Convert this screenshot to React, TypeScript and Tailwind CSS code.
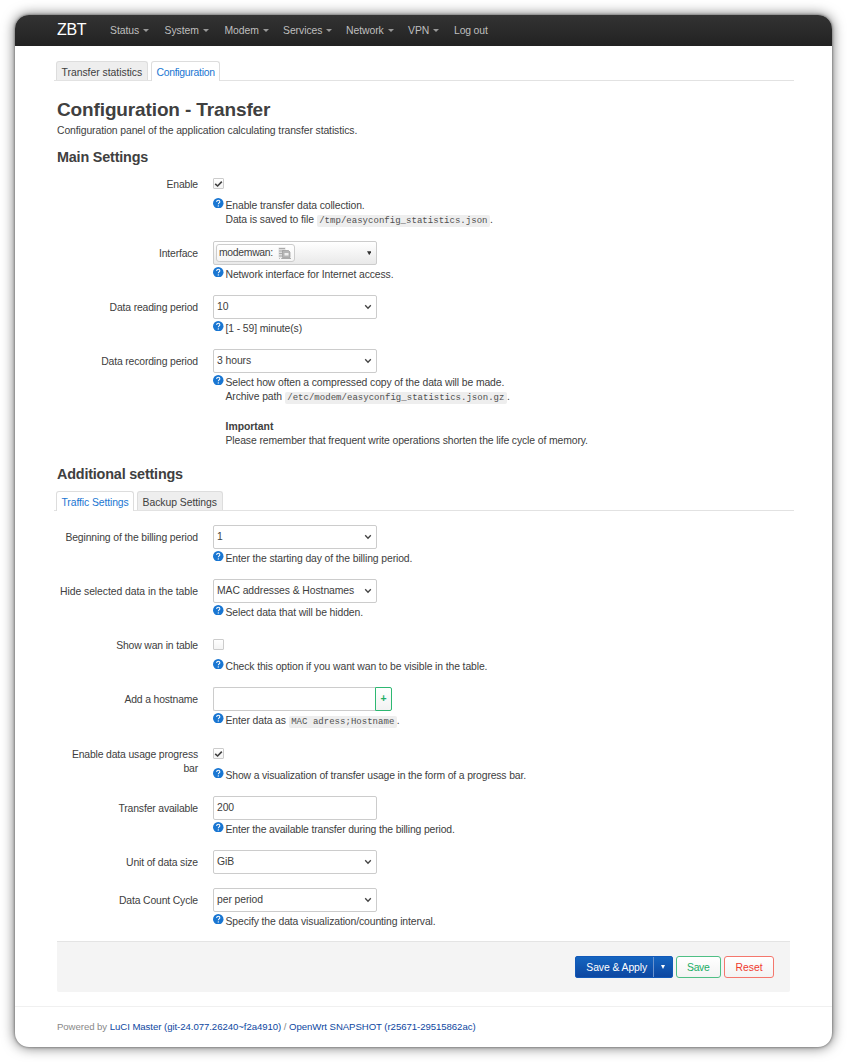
import type { ReactNode } from "react";

const nav: [string, string][] = [
  ["Status", "w-[54.5px]"],
  ["System", "w-[60px]"],
  ["Modem", "w-[58.5px]"],
  ["Services", "w-[63px]"],
  ["Network", "w-[62px]"],
  ["VPN", "w-[46px]"],
];

function HelpIcon() {
  return (
    <svg viewBox="0 0 20 20" className="mt-[-1.5px] h-[10.5px] w-[10.5px] shrink-0">
      <circle cx="10" cy="10" r="10" fill="#1976d2" />
      <path d="M7 7.6C7 5.4 8.3 4.4 10 4.4s3.1 1 3.1 2.7c0 2.2-3 2.3-3 4.9" fill="none" stroke="#fff" strokeWidth="2" />
      <circle cx="10.1" cy="15" r="1.3" fill="#fff" />
    </svg>
  );
}

function Code({ children }: { children: ReactNode }) {
  return (
    <code className="rounded-[2px] bg-[#eeeeee] px-[2.5px] py-[1px] font-['Liberation_Mono',monospace] text-[9px] tracking-[0.03px] text-[#505050]">
      {children}
    </code>
  );
}

type RowProps = { label: ReactNode; h: string; help?: ReactNode; tight?: boolean; children: ReactNode };

function Row({ label, h, help, tight, children }: RowProps) {
  return (
    <div className={`flex shrink-0 ${h}`}>
      <div className="w-[141px] shrink-0 pt-[5.5px] text-right tracking-[-0.15px]">{label}</div>
      <div className="ml-[15px] flex flex-col">
        <div className="flex h-6 items-center">{children}</div>
        {help && (
          <div className={`mt-[3px] flex gap-[2px] whitespace-nowrap ${tight ? "tracking-[-0.15px]" : ""}`}>
            <HelpIcon />
            <div>{help}</div>
          </div>
        )}
      </div>
    </div>
  );
}

function Select({ value }: { value: string }) {
  return (
    <div className="flex h-[23.5px] w-[164px] items-center justify-between self-start rounded-[2px] border border-[#cccccc] bg-white pt-px pr-[4px] pl-[3px] tracking-[-0.08px]">
      <span>{value}</span>
      <svg viewBox="0 0 8 6" className="h-[6px] w-[8px]" fill="none" stroke="#444" strokeWidth="1.3">
        <path d="M1.2 1.2 4 4.2 6.8 1.2" />
      </svg>
    </div>
  );
}

function Check({ on }: { on?: boolean }) {
  return (
    <span className="mb-px flex h-[11px] w-[11px] items-center justify-center rounded-[1px] border border-[#cccccc] bg-gradient-to-b from-white to-[#f4f4f4]">
      {on && (
        <svg viewBox="0 0 9 8" className="h-[8px] w-[9px] shrink-0" fill="none" stroke="#404040" strokeWidth="1.6">
          <path d="M1.2 3.8 3.6 6 7.8 1.6" />
        </svg>
      )}
    </span>
  );
}

function Tabs({ items, active }: { items: [string, string][]; active: number }) {
  return (
    <div className="-ml-[3px] flex h-[20px] w-[740px] shrink-0 gap-[3px] border-b border-[#e2e2e2] pl-[2px]">
      {items.map(([t, c], i) => (
        <div
          key={t}
          className={`rounded-t-[3px] border border-b-0 border-[#dddddd] pt-[3.5px] pl-[4.5px] whitespace-nowrap ${c} ${
            i === active ? "-mb-px h-[20px] bg-white text-[#1976d2]" : "h-[19px] bg-[#eeeeee]"
          }`}
        >
          {t}
        </div>
      ))}
    </div>
  );
}

function Interface() {
  return (
    <div className="flex h-6 w-[164px] items-center justify-between rounded-[2px] border border-[#cccccc] bg-gradient-to-b from-white to-[#e9e9e9] pr-[5px] pl-[2px]">
      <span className="flex h-[18px] w-[79px] items-center rounded-[3px] border border-[#cccccc] bg-gradient-to-b from-white to-[#f5f5f5] pl-[2px] tracking-[-0.3px]">
        <span className="w-[58.5px]">modemwan:</span>
        <svg viewBox="0 0 13 12" className="h-[12px] w-[13px] shrink-0">
          <path d="M.5.5h7v10h-7z" fill="#ddd" />
          <path d="M1 1.5h6M1 4h5M1 6.5h3M1 9h3" stroke="#aaa" />
          <path d="M1 11.5h4" stroke="#bbb" strokeDasharray="1 1" />
          <path d="M4.5 3.5h6l1.5 1.5v5.5h-7.5z" fill="#b5b5b5" stroke="#999" strokeWidth=".7" />
          <path d="M6.500 6h4v2.500h-4z" fill="#eee" />
          <path d="M4 11.500h9" stroke="#aaa" />
        </svg>
      </span>
      <svg viewBox="0 0 5 5" className="h-[4.5px] w-[4.5px]">
        <path d="M0 .3h5L2.5 4.7z" fill="#333" />
      </svg>
    </div>
  );
}

export default function App() {
  return (
    <div className="h-[1062px] w-[847px] bg-white pt-[15px] pl-[15px] font-['Liberation_Sans',Arial,sans-serif] text-[10.4px] leading-[14px] tracking-[-0.11px] text-[#404040]">
      <div className="flex h-[1032px] w-[817px] flex-col overflow-hidden rounded-[14px] bg-white shadow-[0_0_3px_rgba(0,0,0,0.5),0_0_13px_rgba(0,0,0,0.6)]">
        <header className="flex h-[31px] shrink-0 items-center bg-gradient-to-b from-[#333333] to-[#222222] pl-[42px] tracking-[-0.05px] text-[#bfbfbf]">
          <div className="w-[53px] text-[16px] leading-[28px] tracking-[-0.3px] text-white">
            <span className="relative -top-[1px]">ZBT</span>
          </div>
          {nav.map(([n, w]) => (
            <div key={n} className={`flex shrink-0 items-center gap-[4px] ${w}`}>
              {n}
              <svg viewBox="0 0 6 3" className="h-[3px] w-[6px]">
                <path d="M0 0h6L3 3z" fill="#999" />
              </svg>
            </div>
          ))}
          <div className="tracking-[-0.15px]">Log out</div>
        </header>
        <main className="flex shrink-0 flex-col pt-[15px] pl-[42px]">
          <Tabs
            items={[
              ["Transfer statistics", "w-[92px] tracking-[-0.02px]"],
              ["Configuration", "w-[69px] tracking-[-0.28px]"],
            ]}
            active={1}
          />
          <h2 className="mt-[14px] h-[29px] text-[19px] leading-[29px] font-bold tracking-[-0.13px]">Configuration - Transfer</h2>
          <p className="h-[14px] tracking-[-0.1px]">Configuration panel of the application calculating transfer statistics.</p>
          <h3 className="mt-[9px] h-[20px] text-[14.4px] leading-[20px] font-bold tracking-[-0.19px]">Main Settings</h3>
          <div className="mt-[5px] flex flex-col">
            <Row
              label="Enable"
              h="h-[69px]"
              help={<>Enable transfer data collection.<br />Data is saved to file <Code>/tmp/easyconfig_statistics.json</Code>.</>}
            >
              <Check on />
            </Row>
            <Row label="Interface" h="h-[54px]" help="Network interface for Internet access.">
              <Interface />
            </Row>
            <Row label="Data reading period" h="h-[54px]" help="[1 - 59] minute(s)">
              <Select value="10" />
            </Row>
            <Row
              label="Data recording period"
              h="h-[115px]"
              help={
                <>
                  Select how often a compressed copy of the data will be made.<br />
                  Archive path <Code>/etc/modem/easyconfig_statistics.json.gz</Code>.
                  <div className="mt-[15px] font-bold tracking-[0px]">Important</div>
                  Please remember that frequent write operations shorten the life cycle of memory.
                </>
              }
            >
              <Select value="3 hours" />
            </Row>
          </div>
          <h3 className="h-[20px] text-[14.4px] leading-[20px] font-bold tracking-[-0.19px]">Additional settings</h3>
          <div className="mt-[7px] flex flex-col">
            <Tabs
              items={[
                ["Traffic Settings", "w-[78px] tracking-[-0.1px]"],
                ["Backup Settings", "w-[86px] tracking-[-0.04px]"],
              ]}
              active={0}
            />
          </div>
          <div className="mt-[14px] flex flex-col">
            <Row
              label={<span className="tracking-[-0.12px]">Beginning of the billing period</span>}
              h="h-[54px]"
              help="Enter the starting day of the billing period."
            >
              <Select value="1" />
            </Row>
            <Row
              label={<span className="whitespace-nowrap tracking-[-0.06px]">Hide selected data in the table</span>}
              h="h-[54px]"
              help="Select data that will be hidden."
            >
              <Select value="MAC addresses & Hostnames" />
            </Row>
            <Row label="Show wan in table" h="h-[54px]" help="Check this option if you want wan to be visible in the table.">
              <Check />
            </Row>
            <Row label="Add a hostname" h="h-[55px]" help={<>Enter data as <Code>MAC adress;Hostname</Code>.</>}>
              <div className="h-6 w-[162px] rounded-l-[2px] border border-r-0 border-[#cccccc]" />
              <div className="flex h-6 w-[17px] items-center justify-center rounded-r-[2px] border border-[#2eb872] bg-gradient-to-b from-white to-[#f2f2f2] pb-[1px] font-bold text-[#20ad65]">+</div>
            </Row>
            <Row
              label="Enable data usage progress bar"
              h="h-[54px]"
              tight
              help="Show a visualization of transfer usage in the form of a progress bar."
            >
              <Check on />
            </Row>
            <Row label="Transfer available" h="h-[54px]" tight help="Enter the available transfer during the billing period.">
              <div className="flex h-[23.5px] w-[164px] items-center self-start rounded-[2px] border border-[#cccccc] pt-px pl-[3px]">200</div>
            </Row>
            <Row label="Unit of data size" h="h-[38px]">
              <Select value="GiB" />
            </Row>
            <Row label="Data Count Cycle" h="h-[53px]" help="Specify the data visualization/counting interval.">
              <Select value="per period" />
            </Row>
          </div>
          <div className="flex h-[51px] w-[733px] items-center justify-end gap-[3px] rounded-b-[2px] border-t border-[#e4e4e4] bg-[#f4f4f4] pr-[16px] tracking-[0px]">
            <div className="flex h-[22px] rounded-[2px] border border-[#1259b8] bg-gradient-to-b from-[#1565c0] to-[#0d47a1] text-white">
              <span className="flex w-[77.5px] items-center justify-center border-r border-[#6a92cc] pt-px pl-[5px] tracking-[-0.08px]">Save &amp; Apply</span>
              <span className="flex w-[18px] items-center justify-center">
                <svg viewBox="0 0 4 4" className="h-[4px] w-[4px]">
                  <path d="M0 0h4L2 4z" fill="#fff" />
                </svg>
              </span>
            </div>
            <div className="flex h-[22px] w-[45.5px] items-center justify-center rounded-[3px] border border-[#4fbf85] bg-gradient-to-b from-white to-[#f3f3f3] pt-px tracking-[-0.3px] text-[#20ad65]">Save</div>
            <div className="flex h-[22px] w-[50px] items-center justify-center rounded-[3px] border border-[#f4776d] bg-gradient-to-b from-white to-[#f3f3f3] pt-px text-[#f03a2e]">Reset</div>
          </div>
        </main>
        <footer className="mt-[14px] flex-1 border-t border-[#f0f0f0] pt-[13px] pl-[42px] text-[9.6px] tracking-[-0.055px] text-[#888888]">
          Powered by <span className="text-[#0d47a1]">LuCI Master (git-24.077.26240~f2a4910)</span> /{" "}
          <span className="text-[#0d47a1]">OpenWrt SNAPSHOT (r25671-29515862ac)</span>
        </footer>
      </div>
    </div>
  );
}
